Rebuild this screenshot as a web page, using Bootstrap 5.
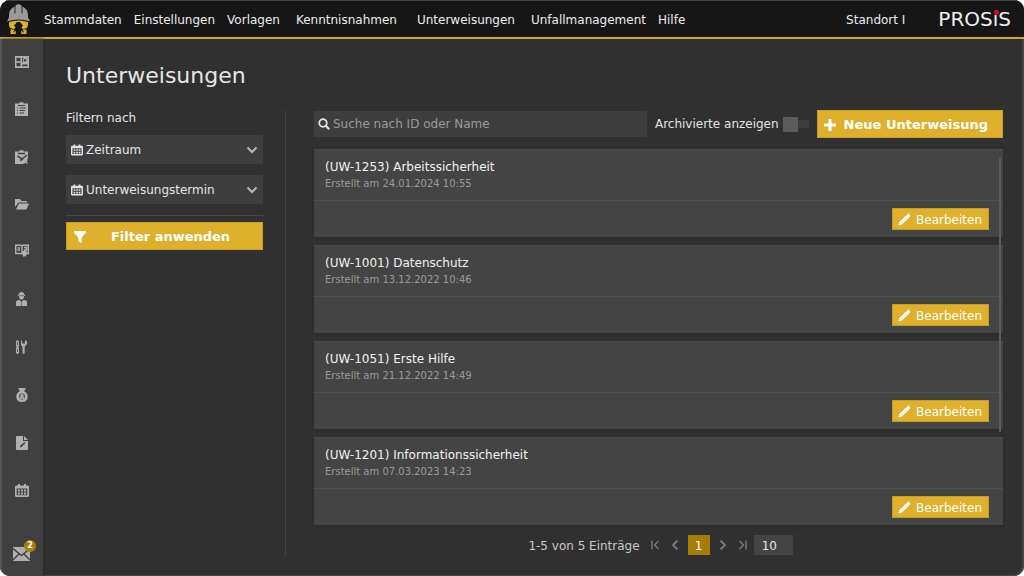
<!DOCTYPE html>
<html lang="de" data-bs-theme="dark">
<head>
<meta charset="utf-8">
<meta name="viewport" content="width=device-width, initial-scale=1">
<title>Unterweisungen</title>
<link href="https://cdn.jsdelivr.net/npm/bootstrap@5.3.0/dist/css/bootstrap.min.css" rel="stylesheet">
<style>
  :root { --gold: #dfb02c; --panel: #444; --field: #3e3e3e; --page: #303030; }
  html { background: #fff; }
  body { background: transparent; font-family: "DejaVu Sans", Verdana, sans-serif; font-size: 12px; line-height: 16px; color: #e4e4e4; }
  a { color: inherit; text-decoration: none; }
  svg { display: block; fill: currentColor; flex: none; }
  .shell { background: var(--page); border-radius: 10px; overflow: hidden; box-shadow: inset -2px -1px #454545; }
  .topbar { height: 39px; background: #161616; border-top: 1px solid #454545; border-bottom: 2px solid #d2a527; padding: 0 13px 0 6px; color: #ededed; }
  .mainmenu { gap: 12px; margin-left: 13px; }
  .topbar .mainmenu, .topbar .site { padding-top: 2px; }
  .wordmark { font-size: 20px; line-height: 24px; color: #f0f0f0; margin-left: 33px; }
  .red-dot { position: absolute; left: 50%; top: 3px; width: 5px; height: 5px; margin-left: -2px; border-radius: 50%; background: #e1001e; }
  .rail { width: 43px; background: #404040; border-left: 2px solid #555; padding-right: 2px; box-shadow: 1px 0 2px #262626; color: #b0b0b0; }
  .rail a { min-height: 32px; }
  .rail .inbox { height: 62px; padding-top: 18px; flex: none; }
  .count { position: absolute; left: 11px; top: -7px; width: 12px; height: 12px; border-radius: 50%; background: #a88008; color: #fff; font-size: 8px; line-height: 12px; text-align: center; font-weight: bold; }
  .page { padding: 21px 21px 20px 23px; }
  h1 { font-size: 22px; line-height: 32px; margin: 0 0 18px; font-weight: 400; color: #e6e6e6; }
  .filters { width: 220px; padding-right: 22px; border-right: 1px solid #444; }
  .filters .caption-line { margin-bottom: 9px; }
  .results { padding-left: 28px; }
  .pick { position: relative; margin-bottom: 11px; }
  .pick svg { position: absolute; left: 5px; top: 9px; pointer-events: none; }
  .pick .chev { left: auto; right: 5px; top: 11px; color: #b8b8b8; }
  .pick select { height: 29px; padding: 1px 24px 0 20px; border: 0; border-radius: 0; background: var(--field) none; font-size: 12px; color: #e4e4e4; }
  .rule { border-top: 1px solid #484848; margin-bottom: 6px; }
  .gold { background: var(--gold); border: 1px solid #c99d24; border-radius: 0; color: #fff; padding: 0; }
  .gold:hover { background: #eabb36; color: #fff; border-color: #c99d24; }
  .big { height: 28px; font-size: 13px; line-height: 16px; font-weight: 700; }
  .big.apply { padding: 1px 7px 0; }
  .new { padding: 1px 14px 0 6px; gap: 8px; }
  .edit { height: 22px; font-size: 12px; line-height: 16px; padding: 1px 6px 0 5px; gap: 5px; }
  .search { position: relative; margin-right: 8px; }
  .search svg { position: absolute; left: 4px; top: 7px; }
  .search input { height: 26px; border: 0; border-radius: 0; background: var(--field); font-size: 12px; padding: 0 4px 0 19px; }
  .search input::placeholder { color: #999; opacity: 1; }
  .archive { gap: 4px; margin-right: 8px; }
  .switcher { appearance: none; width: 26px; height: 15px; margin: 0; background: linear-gradient(#5c5c5c, #5c5c5c) left / 15px 15px no-repeat, linear-gradient(#3e3e3e, #3e3e3e) right / 12px 8px no-repeat; }
  .switcher:checked { background-position: right, left; }
  .entries { position: relative; display: grid; gap: 8px; margin-top: 11px; }
  .entry { background: var(--panel); box-shadow: 0 1px 2px #272727; border-top: 1px solid #4b4b4b; }
  .entry-head { height: 51px; padding: 9px 11px 0; border-bottom: 1px solid #505050; }
  .entry-foot { height: 36px; padding: 0 14px; }
  .entry h2 { font-size: 12px; line-height: 16px; margin: 0; font-weight: 400; color: #f2f2f2; }
  .entry p { font-size: 10px; line-height: 14px; margin: 2px 0 0; color: #9b9b9b; }
  .thumb { position: absolute; right: 2px; top: 9px; width: 2px; height: 73%; background: #5c5c5c; }
  .pager { margin-top: 10px; gap: 11px; padding-left: 4px; color: #c9c9c9; }
  .pager > span { padding-top: 1px; }
  .pager button { border: 0; background: none; padding: 0; color: #7d7d7d; }
  .pager .current { width: 22px; height: 20px; background: #a57c06; color: #fff; padding-top: 1px; margin: 0 -3px; }
  .pager input { width: 39px; height: 20px; border: 0; background: #444; color: #e4e4e4; padding: 1px 8px 0; font-size: 12px; margin-left: -4px; }
</style>
</head>
<body>
<svg width="0" height="0" class="position-absolute" aria-hidden="true">
  <symbol id="cal" viewBox="0 0 14 13"><path fill-rule="evenodd" d="M1.500 1.500H3V0H5V1.500H9V0H11V1.500H12.500Q14 1.500 14 3V11.500Q14 13 12.500 13H1.500Q0 13 0 11.500V3Q0 1.500 1.500 1.500ZM1.700 4.500V11.300H12.300V4.500Z"/><path d="M3 5.500h2v2H3zM6 5.500h2v2H6zM9 5.500h2v2H9zM3 8.500h2v2H3zM6 8.500h2v2H6zM9 8.500h2v2H9z"/></symbol>
  <symbol id="pencil" viewBox="0 0 13 13"><path d="M.500 12.500 1.300 9.300 9.300 1.300Q10.200.300 11.200 1.100L11.900 1.800Q12.700 2.800 11.800 3.700L3.700 11.700Z"/><path d="M3 10 9.500 3.500" stroke="#e8c869" stroke-width=".5"/></symbol>
  <symbol id="chev" viewBox="0 0 12 8"><path d="M1.500 1.500 6 6l4.500-4.500" fill="none" stroke="currentColor" stroke-width="2"/></symbol>
</svg>

<div class="shell d-flex flex-column min-vh-100">
  <header class="topbar d-flex align-items-center">
    <a href="#" aria-label="Startseite"><svg width="25" height="32" viewBox="0 0 25 32">
      <path fill="#9a9a9a" d="M3 14.500Q2.500 6 8.500 3.500V10H9.500V2.500Q12.500 0 15.500 2.500V10H16.500V3.500Q22.500 6 22 14.500L24 18.500Q12.500 14.500 1 18.500Z"/>
      <path d="M9 3.500V11M16 3.500V11" stroke="#666" stroke-width="1"/>
      <path fill="#e0b02c" d="M3 19Q8 17.500 12.500 17.500T22 19Q22.500 24 20 26.500L20.500 28V31H15.500L15 28.500 17.500 27 15.500 24.500 17 22.500 14 19H11L8 22.500 9.500 24.500 7.500 27 10 28.500 9.500 31H4.500V28L5 26.500Q2.500 24 3 19Z"/>
      <path d="M3.500 25l4 1.500M7 29l2-.500M21.500 25l-4 1.500M18 29l-2-.500" stroke="#161616" stroke-width=".9"/>
    </svg></a>
    <nav class="mainmenu d-flex">
      <a href="#">Stammdaten</a><a href="#">Einstellungen</a><a href="#" class="me-1">Vorlagen</a><a href="#" class="me-2">Kenntnisnahmen</a><a href="#" class="me-1">Unterweisungen</a><a href="#">Unfallmanagement</a><a href="#">Hilfe</a>
    </nav>
    <a href="#" class="site ms-auto">Standort I</a>
    <div class="wordmark">PROS<span class="position-relative">i<span class="red-dot"></span></span>S</div>
  </header>

  <div class="d-flex flex-fill">
    <nav class="rail d-flex flex-column flex-shrink-0" aria-label="Module">
      <a href="#" class="d-flex flex-fill align-items-center justify-content-center" aria-label="Dashboard"><svg width="14" height="12" viewBox="0 0 14 12"><path fill-rule="evenodd" d="M0 0H14V12H0ZM1.500 1.700V5.200H5.500V1.700ZM1.500 6.700V10.300H5.500V6.700ZM7 8.500V10.300H12.500V8.500ZM7 1.700V7L8 6 7.500 4 9 1.700ZM12.500 1.700V3L11.500 1.700Z"/><circle cx="10" cy="4.200" r="1.300" fill="#404040"/></svg></a>
      <a href="#" class="d-flex flex-fill align-items-center justify-content-center" aria-label="Aufgaben"><svg width="13" height="14" viewBox="0 0 13 14"><path d="M0 1.500H4Q4 0 6.500 0T9 1.500H13V14H0Z"/><path d="M3 3.500H10M2 6h1M4.500 6H11M2 8.500h1M4.500 8.500H10M2 11h1M4.500 11H9" stroke="#404040" stroke-width="1.100"/></svg></a>
      <a href="#" class="d-flex flex-fill align-items-center justify-content-center" aria-label="Prüfungen"><svg width="13" height="14" viewBox="0 0 13 14"><path d="M0 1.500H4Q4 0 6.500 0T9 1.500H13V8L8 14H0Z"/><path d="M3 3.500H10M2.500 6 5 7.500 7 9 12 5M5 10.500 8 9" fill="none" stroke="#404040" stroke-width="1.500"/><path d="m8.500 9.500 4 4m0-4-4 4" stroke="currentColor" stroke-width="1.500"/></svg></a>
      <a href="#" class="d-flex flex-fill align-items-center justify-content-center" aria-label="Dokumente"><svg width="14" height="12" viewBox="0 0 14 12"><path d="M0 9V1H5L6.500 3H12V4.500H3.500Z"/><path d="M4 5.500H14L11.500 11.500H1Z"/></svg></a>
      <a href="#" class="d-flex flex-fill align-items-center justify-content-center" aria-label="Schulungen"><svg width="14" height="13" viewBox="0 0 14 13"><path d="M.7 1.200H6L7 2 8 1.200H13.300V9.500H.7ZM7 2V9M2.500 4H5M2.500 6H5M9 3.500h2.500v2.500H9" fill="none" stroke="currentColor" stroke-width="1.400"/><circle cx="9.500" cy="9" r="2.500"/><path d="M8 10H11V13L9.500 12 8 13Z"/></svg></a>
      <a href="#" class="d-flex flex-fill align-items-center justify-content-center" aria-label="Personen"><svg width="11" height="14" viewBox="0 0 11 14"><path d="M2.500 3Q3 0 5.500 0T8.500 3H9V4H8Q8 7.500 5.500 7.500T3 4H2V3ZM0 14V10Q0 8 3.500 8L5.500 10 7.500 8Q11 8 11 10V14Z"/><path d="M3 3.700h5M5.500 10v4" stroke="#404040" stroke-width=".6"/></svg></a>
      <a href="#" class="d-flex flex-fill align-items-center justify-content-center" aria-label="Werkzeuge"><svg width="11" height="14" viewBox="0 0 11 14"><path d="M0 1.500Q1.500-1 3 1.500V6L2.300 7 3 8V13L1.500 14 0 13V8L.7 7 0 6ZM5 1 6 0V3.500H9V0L11 1.500V4L8.700 6.500V13Q7.500 14.700 6.500 13V6.500L5 5Z"/><path d="M1.500 2V5M1.500 9v3" stroke="#404040" stroke-width=".8"/></svg></a>
      <a href="#" class="d-flex flex-fill align-items-center justify-content-center" aria-label="Gefahrstoffe"><svg width="12" height="14" viewBox="0 0 12 14"><path d="M2.500 0H9.500V1.800H8.500V3.500Q12 5 11.700 9 11.300 14 6 14T.3 9Q0 5 3.500 3.500V1.800H2.500Z"/><circle cx="6" cy="8.500" r="3" fill="#404040"/><circle cx="6" cy="7.800" r="1.700"/><path d="m3.500 11 5-2M3.500 9l5 2" stroke="currentColor" stroke-width="1"/></svg></a>
      <a href="#" class="d-flex flex-fill align-items-center justify-content-center" aria-label="Formulare"><svg width="12" height="14" viewBox="0 0 12 14"><path d="M0 1Q0 0 1 0H7V5H12V13Q12 14 11 14H1Q0 14 0 13ZM8 0 12 4H8Z"/><path d="m3.500 11.500 1-2L8.500 6l1 1-4 4Z" fill="#404040"/></svg></a>
      <a href="#" class="d-flex flex-fill align-items-center justify-content-center" aria-label="Kalender"><svg width="14" height="13"><use href="#cal"/></svg></a>
      <a href="#" class="inbox d-flex align-items-center justify-content-center" aria-label="Nachrichten"><span class="position-relative"><svg width="17" height="14" viewBox="0 0 17 14"><path d="M0 0H17V14H0Z"/><path d="m0 1.500 8.500 7 8.500-7M0 13l6-6M17 13l-6-6" fill="none" stroke="#404040" stroke-width="1.400"/></svg><span class="count">2</span></span></a>
    </nav>

    <main class="page flex-fill d-flex flex-column">
      <h1>Unterweisungen</h1>
      <div class="d-flex flex-fill">
        <form class="filters flex-shrink-0">
          <div class="caption-line">Filtern nach</div>
          <div class="pick"><svg width="12" height="12"><use href="#cal"/></svg><select class="form-select" aria-label="Zeitraum"><option>Zeitraum</option></select><svg class="chev" width="12" height="8"><use href="#chev"/></svg></div>
          <div class="pick"><svg width="12" height="12"><use href="#cal"/></svg><select class="form-select" aria-label="Unterweisungstermin"><option>Unterweisungstermin</option></select><svg class="chev" width="12" height="8"><use href="#chev"/></svg></div>
          <div class="rule"></div>
          <button type="button" class="btn gold big apply w-100 d-flex align-items-center"><svg width="12" height="12" viewBox="0 0 11 11"><path d="M0 0H11V1.500L7 6V11L4 9.500V6L0 1.500Z"/></svg><span class="flex-fill text-center">Filter anwenden</span></button>
        </form>

        <section class="results flex-fill">
          <div class="d-flex align-items-center">
            <div class="search flex-fill"><svg width="12" height="12" viewBox="0 0 12 12"><circle cx="5" cy="5" r="3.800" fill="none" stroke="currentColor" stroke-width="1.700"/><path d="m7.800 7.800 3.400 3.400" stroke="currentColor" stroke-width="2.200"/></svg><input type="search" class="form-control" placeholder="Suche nach ID oder Name" aria-label="Suche"></div>
            <div class="archive d-flex align-items-center"><label for="archived">Archivierte anzeigen</label><input type="checkbox" class="switcher" id="archived" role="switch"></div>
            <button type="button" class="btn gold big new d-flex align-items-center"><svg width="12" height="12" viewBox="0 0 12 12"><path d="M4.500 0h3v4.500H12v3H7.500V12h-3V7.500H0v-3h4.500z"/></svg>Neue Unterweisung</button>
          </div>
          <div class="entries">
            <article class="entry"><div class="entry-head"><h2>(UW-1253) Arbeitssicherheit</h2><p>Erstellt am 24.01.2024 10:55</p></div><div class="entry-foot d-flex align-items-center justify-content-end"><button type="button" class="btn gold edit d-flex align-items-center"><svg width="13" height="13"><use href="#pencil"/></svg>Bearbeiten</button></div></article>
            <article class="entry"><div class="entry-head"><h2>(UW-1001) Datenschutz</h2><p>Erstellt am 13.12.2022 10:46</p></div><div class="entry-foot d-flex align-items-center justify-content-end"><button type="button" class="btn gold edit d-flex align-items-center"><svg width="13" height="13"><use href="#pencil"/></svg>Bearbeiten</button></div></article>
            <article class="entry"><div class="entry-head"><h2>(UW-1051) Erste Hilfe</h2><p>Erstellt am 21.12.2022 14:49</p></div><div class="entry-foot d-flex align-items-center justify-content-end"><button type="button" class="btn gold edit d-flex align-items-center"><svg width="13" height="13"><use href="#pencil"/></svg>Bearbeiten</button></div></article>
            <article class="entry"><div class="entry-head"><h2>(UW-1201) Informationssicherheit</h2><p>Erstellt am 07.03.2023 14:23</p></div><div class="entry-foot d-flex align-items-center justify-content-end"><button type="button" class="btn gold edit d-flex align-items-center"><svg width="13" height="13"><use href="#pencil"/></svg>Bearbeiten</button></div></article>
            <div class="thumb"></div>
          </div>
          <div class="pager d-flex align-items-center justify-content-center">
            <span>1-5 von 5 Einträge</span>
            <button type="button" aria-label="Erste Seite"><svg width="9" height="10" viewBox="0 0 9 10"><path d="M1 .500v9M7.500 1l-4 4 4 4" fill="none" stroke="currentColor" stroke-width="1.300"/></svg></button>
            <button type="button" aria-label="Vorherige Seite"><svg width="9" height="10" viewBox="0 0 9 10"><path d="M6.500.500 2 5l4.500 4.500" fill="none" stroke="currentColor" stroke-width="1.800"/></svg></button>
            <button type="button" class="current">1</button>
            <button type="button" aria-label="Nächste Seite"><svg width="9" height="10" viewBox="0 0 9 10"><path d="M2.500.500 7 5 2.500 9.500" fill="none" stroke="currentColor" stroke-width="1.800"/></svg></button>
            <button type="button" aria-label="Letzte Seite"><svg width="9" height="10" viewBox="0 0 9 10"><path d="M8 .500v9M1.500 1l4 4-4 4" fill="none" stroke="currentColor" stroke-width="1.300"/></svg></button>
            <input type="text" value="10" aria-label="Einträge pro Seite">
          </div>
        </section>
      </div>
    </main>
  </div>
</div>
<script src="https://cdn.jsdelivr.net/npm/bootstrap@5.3.0/dist/js/bootstrap.bundle.min.js"></script>
</body>
</html>
